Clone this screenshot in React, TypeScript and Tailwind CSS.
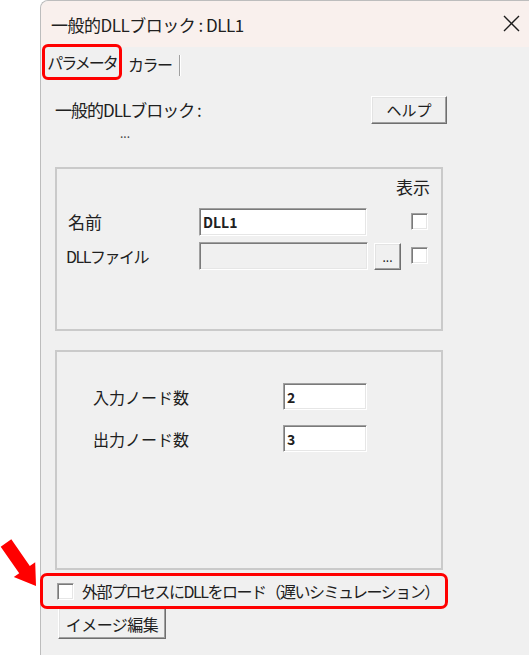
import React from "react";

const sunken =
  "border border-t-[#a0a0a0] border-l-[#a0a0a0] border-b-white border-r-white shadow-[inset_1px_1px_0_#7a7a7a,inset_-1px_-1px_0_#e6e6e6]";
const raised =
  "border border-t-white border-l-white border-b-[#6f6f6f] border-r-[#6f6f6f] shadow-[inset_-1px_-1px_0_#a0a0a0,inset_1px_1px_0_#e3e3e3]";

function Check() {
  return <div className={`w-[17px] h-[17px] bg-white shrink-0 ${sunken}`} />;
}

export default function App() {
  return (
    <div className="w-[529px] h-[655px] bg-white flex relative overflow-hidden font-['Noto_Sans_CJK_JP','Noto_Sans',sans-serif] text-[#202020]">
      <div className="w-[40px] shrink-0" />
      <svg
        className="absolute left-0 top-[530px]"
        width="45"
        height="65"
        viewBox="0 0 45 65"
      >
        <polygon
          fill="#ff0000"
          points="0.7,16.7 11.3,9.3 29.8,35.9 35.2,32.2 36,56 13.8,47 19.2,43.3"
        />
      </svg>
      <div className="flex-1 flex flex-col bg-[#f0f0f0] border-l border-t border-[#bdbdbd] rounded-tl-[8px]">
        {/* title bar */}
        <div className="h-[46px] shrink-0 bg-[#f9f0ed] rounded-tl-[8px] flex items-center justify-between pl-[10px] pr-[9px]">
          <span className="text-[17px] leading-[20px] tracking-[-0.5px] mt-[2px]">
            一般的DLLブロック : DLL1
          </span>
          <svg width="17" height="17" viewBox="0 0 17 17" className="mt-[-2px]">
            <path
              d="M1 1 L16 16 M16 1 L1 16"
              stroke="#1c1c1c"
              strokeWidth="1.4"
              fill="none"
            />
          </svg>
        </div>
        {/* tabs */}
        <div className="h-[33px] shrink-0 flex items-start">
          <div className="relative z-10 ml-[1px] -mt-[3px] h-[36px] w-[80px] border-[3px] border-[#ff0000] rounded-[6px] flex items-center justify-center text-[16px] tracking-[-2px] leading-[20px]">
            パラメータ
          </div>
          <div className="ml-[6px] mt-[7px] text-[16px] tracking-[-1.5px] leading-[20px]">
            カラー
          </div>
          <div className="ml-[7px] mt-[8px] w-[2px] h-[21px] border-l border-l-[#a0a0a0] border-r border-r-white" />
        </div>
        {/* content */}
        <div className="pl-[14px] flex flex-col">
          <div className="mt-[16px] h-[27px] flex items-center">
            <div className="w-[316px] text-[17px] tracking-[-1px] leading-[20px]">
              一般的DLLブロック :
            </div>
            <button
              className={`w-[76px] h-[28px] bg-[#f0f0f0] text-[15px] leading-[20px] flex items-center justify-center ${raised}`}
            >
              ヘルプ
            </button>
          </div>
          <div className="mt-[3px] h-[14px] pl-[65px] text-[12px] leading-[14px] text-[#444]">
            ...
          </div>

          {/* group 1 */}
          <div className="mt-[27px] w-[388px] h-[164px] border-2 border-[#cacaca] flex flex-col">
            <div className="mt-[8px] h-[20px] pr-[11px] text-right text-[17px] leading-[20px]">
              表示
            </div>
            <div className="mt-[11px] h-[28px] flex items-center pl-[11px]">
              <div className="w-[131px] text-[17px] leading-[20px]">名前</div>
              <div
                className={`w-[168px] h-[28px] bg-white flex items-center pl-[3px] text-[14px] font-semibold leading-[16px] ${sunken}`}
              >
                DLL1
              </div>
              <div className="ml-[44px] mt-[-1px]">
                <Check />
              </div>
            </div>
            <div className="mt-[5px] h-[29px] flex items-center pl-[9px]">
              <div className="w-[133px] text-[16px] tracking-[-1.5px] leading-[20px]">
                DLLファイル
              </div>
              <div className={`w-[169px] h-[28px] bg-[#f0f0f0] ${sunken}`} />
              <button
                className={`ml-[6px] w-[27px] h-[27px] mt-[2px] bg-[#f0f0f0] text-[12px] leading-[12px] flex items-end justify-center pb-[6px] ${raised}`}
              >
                ...
              </button>
              <div className="ml-[10px] mt-[-1px]">
                <Check />
              </div>
            </div>
          </div>

          {/* group 2 */}
          <div className="mt-[19px] w-[388px] h-[220px] border-2 border-[#cacaca] flex flex-col">
            <div className="mt-[31px] h-[27px] flex items-center pl-[36px]">
              <div className="w-[190px] text-[16px] leading-[20px]">入力ノード数</div>
              <div
                className={`w-[84px] h-[27px] bg-white flex items-center pl-[3px] text-[14px] font-semibold leading-[16px] ${sunken}`}
              >
                2
              </div>
            </div>
            <div className="mt-[15px] h-[27px] flex items-center pl-[36px]">
              <div className="w-[190px] text-[16px] leading-[20px]">出力ノード数</div>
              <div
                className={`w-[84px] h-[27px] bg-white flex items-center pl-[3px] text-[14px] font-semibold leading-[16px] ${sunken}`}
              >
                3
              </div>
            </div>
          </div>

          {/* checkbox row */}
          <div className="relative z-10 mt-[3px] -ml-[15px] w-[408px] h-[36px] border-[3px] border-[#ff0000] rounded-[7px] flex items-center">
            <div className="ml-[14px]">
              <Check />
            </div>
            <div className="ml-[8px] text-[16px] tracking-[-1.5px] leading-[20px] whitespace-nowrap">
              外部プロセスにDLLをロード（遅いシミュレーション）
            </div>
          </div>
          <button
            className={`-mt-[1px] ml-[3px] w-[108px] h-[31px] bg-[#f0f0f0] text-[16px] tracking-[-0.5px] leading-[20px] flex items-center justify-center ${raised}`}
          >
            イメージ編集
          </button>
        </div>
      </div>
    </div>
  );
}
